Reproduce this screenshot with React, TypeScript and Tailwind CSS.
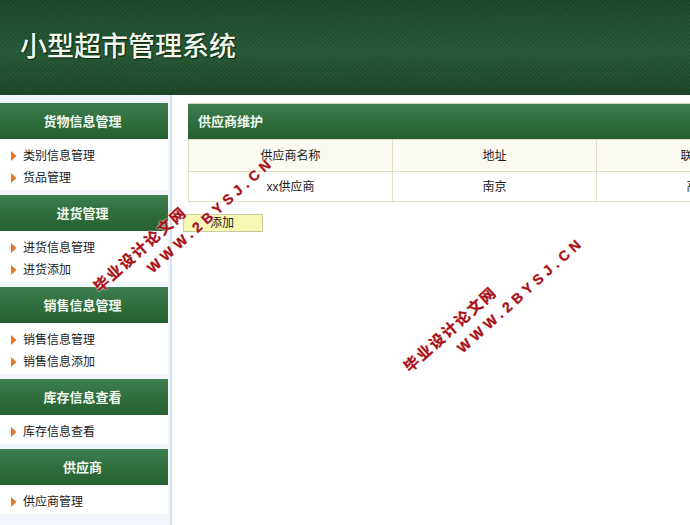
import React from "react";

const sections = [
  { title: "货物信息管理", items: ["类别信息管理", "货品管理"] },
  { title: "进货管理", items: ["进货信息管理", "进货添加"] },
  { title: "销售信息管理", items: ["销售信息管理", "销售信息添加"] },
  { title: "库存信息查看", items: ["库存信息查看"] },
  { title: "供应商", items: ["供应商管理"] },
];

const cjk = "font-['Liberation_Sans','Noto_Sans_CJK_SC',sans-serif]";

function Arrow() {
  return (
    <svg width="6" height="10" viewBox="0 0 6 10" className="shrink-0">
      <path d="M0 0 L5.5 5 L0 10 Z" fill="#e2762a" />
    </svg>
  );
}

function Watermark({ className }: { className: string }) {
  return (
    <div className={"absolute w-[190px] -rotate-[42deg] font-bold leading-[20px] text-[#a80f14] [-webkit-text-stroke:0.3px_#a80f14] [text-shadow:0_0_2px_#fff,0_0_2px_#fff] whitespace-nowrap " + className}>
      <div className="text-[15px] tracking-[2px]">毕业设计论文网</div>
      <div className="ml-[52px] mt-[1px] text-[14px] tracking-[4.5px]">WWW.2BYSJ.CN</div>
    </div>
  );
}

export default function App() {
  return (
    <div className={"relative h-[525px] w-[690px] overflow-hidden bg-white text-[12px] text-[#1c1c1c] " + cjk}>
      <header className="flex h-[95px] items-center bg-[repeating-linear-gradient(45deg,rgba(255,255,255,0.025)_0_1.5px,transparent_1.5px_3px),repeating-linear-gradient(-45deg,rgba(0,0,0,0.08)_0_1.5px,transparent_1.5px_3px),linear-gradient(#1b4729,#275b36_55%,#1b4527)] pl-[20px]">
        <h1 className="text-[27px] font-medium leading-none text-[#f0f6ec] [text-shadow:0_0_2px_#0b2a12,1px_1px_1px_#0b2a12]">小型超市管理系统</h1>
      </header>
      <div className="flex">
        <aside className="h-[430px] w-[172px] shrink-0 border-r-2 border-[#d5e2ef] bg-[#f1f6fc] pt-[8px]">
          {sections.map((s) => (
            <section key={s.title} className="mb-[5px] w-[168px]">
              <h2 className="flex h-[36px] items-center justify-center bg-gradient-to-b from-[#3d7d4d] to-[#245f2f] pr-[3px] pt-[2px] text-[13px] font-bold text-[#f2f8ee]">{s.title}</h2>
              <ul className="bg-white pb-[1px] pt-[6px]">
                {s.items.map((it) => (
                  <li key={it} className="flex h-[22px] items-center gap-[6px] pl-[11px]">
                    <Arrow />
                    <span>{it}</span>
                  </li>
                ))}
              </ul>
            </section>
          ))}
        </aside>
        <main className="flex-1 pl-[16px] pt-[8px]">
          <div className="w-[640px]">
            <h2 className="flex h-[36px] items-center border-t border-[#cfdcc0] bg-gradient-to-b from-[#3d7d4d] to-[#245f2f] pl-[10px] text-[13px] font-bold text-[#f2f8ee]">供应商维护</h2>
            <table className="w-[613px] table-fixed border-collapse">
              <tbody>
                <tr className="h-[32px] bg-[#fbfaf2]">
                  <td className="border border-[#dfe0c4] text-center">供应商名称</td>
                  <td className="border border-[#dfe0c4] text-center">地址</td>
                  <td className="border border-[#dfe0c4] text-center">联系人</td>
                </tr>
                <tr className="h-[30px]">
                  <td className="border border-[#dfe0c4] text-center">xx供应商</td>
                  <td className="border border-[#dfe0c4] text-center">南京</td>
                  <td className="border border-[#dfe0c4] text-center">高明</td>
                </tr>
              </tbody>
            </table>
            <button className="ml-[-5px] mt-[12px] block h-[18px] w-[80px] border border-[#c8cca0] bg-[#f6f8b4] pr-[2px] text-[12px] leading-none">添加</button>
          </div>
        </main>
      </div>
      <Watermark className="left-[79px] top-[213px]" />
      <Watermark className="left-[389px] top-[293px]" />
    </div>
  );
}
